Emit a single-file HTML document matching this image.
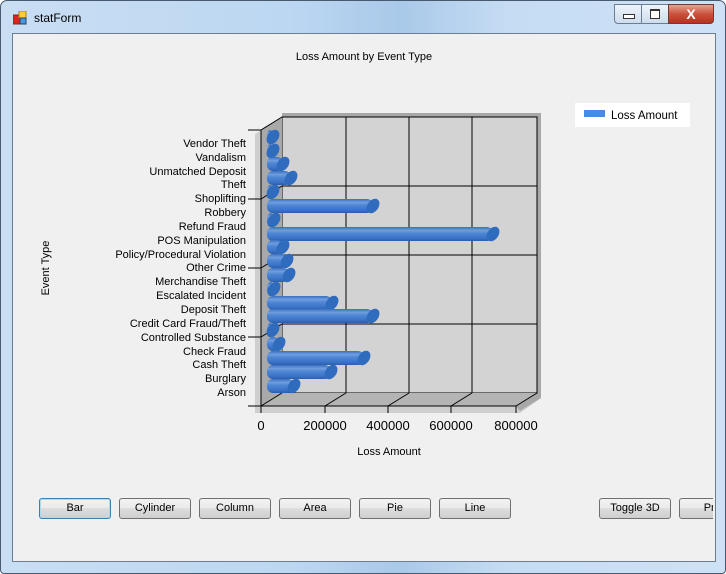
<!DOCTYPE html>
<html><head><style>
body{margin:0;width:726px;height:574px;overflow:hidden;background:#fff;font-family:"Liberation Sans",sans-serif;}
.win{position:absolute;left:0;top:0;width:724px;height:572px;border:1px solid #4a5a6e;border-radius:7px 7px 4px 4px;background:linear-gradient(90deg,#c9def3 0%,#bcd7f2 40%,#a9c9e9 55%,#c5dcf3 70%,#cfe2f5 100%);}
.client{position:absolute;left:11px;top:32px;width:702px;height:527px;border:1px solid #6e7e90;background:#f0f0f0;}
.title{position:absolute;left:33px;top:10px;font-size:12px;color:#000;}
.btn{position:absolute;top:498px;width:72px;height:21px;box-sizing:border-box;border:1px solid #707070;border-radius:3px;background:linear-gradient(#f2f2f2,#ebebeb 45%,#dddddd 50%,#cfcfcf);font-size:11px;text-align:center;line-height:19px;}
</style></head><body>
<div class="win">
<svg style="position:absolute;left:12px;top:10px" width="16" height="14"><rect x="0" y="4" width="7" height="9" fill="#d22" stroke="#822"/><rect x="6" y="0" width="7" height="7" fill="#fc3" stroke="#a80"/><rect x="7" y="7" width="6" height="6" fill="#49d" stroke="#246"/></svg>
<div class="title">statForm</div>
<div style="position:absolute;left:613px;top:3px;width:26px;height:18px;border:1px solid #6b7d93;border-radius:0 0 0 4px;background:linear-gradient(#eef4fb,#cddcec);"><div style="margin:9px 8px;width:10px;height:3px;border:1px solid #333;background:#fff"></div></div>
<div style="position:absolute;left:640px;top:3px;width:26px;height:18px;border:1px solid #6b7d93;background:linear-gradient(#eef4fb,#cddcec);"><div style="margin:4px 8px;width:8px;height:7px;border:1px solid #333;border-top-width:2px;background:#fff"></div></div>
<div style="position:absolute;left:667px;top:3px;width:44px;height:18px;border:1px solid #6b3b36;border-radius:0 0 4px 0;background:linear-gradient(#e8a391,#c9523c 50%,#b8321e);color:#fff;font-weight:bold;font-size:14px;text-align:center;line-height:18px;">X</div>
<div class="client"></div>
</div>
<svg style="position:absolute;left:0;top:0" width="726" height="574" font-family="Liberation Sans,sans-serif">
<defs>
<linearGradient id="bg" x1="0" y1="0" x2="0" y2="1">
<stop offset="0" stop-color="#3a6fbf"/><stop offset="0.25" stop-color="#6f9ee0"/><stop offset="0.45" stop-color="#4f86d4"/><stop offset="0.8" stop-color="#3a72c6"/><stop offset="1" stop-color="#2b5ea8"/></linearGradient>
</defs>
<text x="364" y="60" font-size="11" text-anchor="middle">Loss Amount by Event Type</text>
<rect x="575" y="103" width="115" height="24" fill="#fff"/>
<rect x="584" y="110" width="21" height="7" fill="#4a8ae6"/>
<text x="611" y="119" font-size="11.5">Loss Amount</text>
<text transform="translate(49,268) rotate(-90)" font-size="11" text-anchor="middle">Event Type</text>
<text x="389" y="455" font-size="11" text-anchor="middle">Loss Amount</text>
<polygon points="255,134 276,121 541,121 541,398 520,413 255,413" fill="#cfcfcf"/>
<polygon points="282,113 541,113 541,398 520,411 516,406 537,393 537,117 282,117" fill="#a8a8a8"/>
<rect x="282" y="117" width="255" height="276" fill="#d3d3d3" stroke="#000"/>
<polygon points="261,130 282,117 282,393 261,406" fill="#a9a9a9"/>
<polygon points="261,406 282,393 537,393 516,406" fill="#b4b4b4"/>
<g stroke="#000" stroke-width="1" fill="none">
<line x1="346" y1="117" x2="346" y2="393"/><line x1="409" y1="117" x2="409" y2="393"/><line x1="472" y1="117" x2="472" y2="393"/>
<line x1="282" y1="186" x2="537" y2="186"/><line x1="282" y1="255" x2="537" y2="255"/><line x1="282" y1="324" x2="537" y2="324"/>
<line x1="261" y1="130" x2="282" y2="117"/><line x1="261" y1="199" x2="282" y2="186"/><line x1="261" y1="268" x2="282" y2="255"/><line x1="261" y1="337" x2="282" y2="324"/><line x1="261" y1="406" x2="282" y2="393"/>
<line x1="325" y1="406" x2="346" y2="393"/><line x1="388" y1="406" x2="409" y2="393"/><line x1="451" y1="406" x2="472" y2="393"/><line x1="516" y1="406" x2="537" y2="393"/>
<line x1="261" y1="130" x2="261" y2="406"/><line x1="261" y1="406" x2="516" y2="406"/>
<line x1="248" y1="130" x2="261" y2="130"/><line x1="248" y1="199" x2="261" y2="199"/><line x1="248" y1="268" x2="261" y2="268"/><line x1="248" y1="337" x2="261" y2="337"/><line x1="248" y1="406" x2="261" y2="406"/>
<line x1="261" y1="406" x2="261" y2="413"/><line x1="325" y1="406" x2="325" y2="413"/><line x1="388" y1="406" x2="388" y2="413"/><line x1="451" y1="406" x2="451" y2="413"/><line x1="516" y1="406" x2="516" y2="413"/>
</g>
<g font-size="13" text-anchor="middle" fill="#000">
<text x="261" y="430">0</text><text x="325" y="430">200000</text><text x="388" y="430">400000</text><text x="451" y="430">600000</text><text x="516" y="430">800000</text>
</g>
<g font-size="11" text-anchor="end" fill="#000">
<text x="246" y="147">Vendor Theft</text>
<text x="246" y="161">Vandalism</text>
<text x="246" y="175">Unmatched Deposit</text>
<text x="246" y="188">Theft</text>
<text x="246" y="202">Shoplifting</text>
<text x="246" y="216">Robbery</text>
<text x="246" y="230">Refund Fraud</text>
<text x="246" y="244">POS Manipulation</text>
<text x="246" y="258">Policy/Procedural Violation</text>
<text x="246" y="271">Other Crime</text>
<text x="246" y="285">Merchandise Theft</text>
<text x="246" y="299">Escalated Incident</text>
<text x="246" y="313">Deposit Theft</text>
<text x="246" y="327">Credit Card Fraud/Theft</text>
<text x="246" y="341">Controlled Substance</text>
<text x="246" y="355">Check Fraud</text>
<text x="246" y="368">Cash Theft</text>
<text x="246" y="382">Burglary</text>
<text x="246" y="396">Arson</text>
</g>
<g>
<g transform="translate(0,137)"><rect x="267" y="-7" width="6" height="14" rx="6" fill="url(#bg)"/><ellipse cx="273" cy="0" rx="5.5" ry="8" transform="rotate(35 273 0)" fill="#2f6cbd"/></g>
<g transform="translate(0,151)"><rect x="267" y="-7" width="6" height="14" rx="6" fill="url(#bg)"/><ellipse cx="273" cy="0" rx="5.5" ry="8" transform="rotate(35 273 0)" fill="#2f6cbd"/></g>
<g transform="translate(0,164)"><rect x="267" y="-7" width="16" height="14" rx="6" fill="url(#bg)"/><ellipse cx="283" cy="0" rx="5.5" ry="8" transform="rotate(35 283 0)" fill="#2f6cbd"/></g>
<g transform="translate(0,178)"><rect x="267" y="-7" width="24" height="14" rx="6" fill="url(#bg)"/><ellipse cx="291" cy="0" rx="5.5" ry="8" transform="rotate(35 291 0)" fill="#2f6cbd"/></g>
<g transform="translate(0,192)"><rect x="267" y="-7" width="6" height="14" rx="6" fill="url(#bg)"/><ellipse cx="273" cy="0" rx="5.5" ry="8" transform="rotate(35 273 0)" fill="#2f6cbd"/></g>
<g transform="translate(0,206)"><rect x="267" y="-7" width="106" height="14" rx="6" fill="url(#bg)"/><ellipse cx="373" cy="0" rx="5.5" ry="8" transform="rotate(35 373 0)" fill="#2f6cbd"/></g>
<g transform="translate(0,220)"><rect x="267" y="-7" width="7" height="14" rx="6" fill="url(#bg)"/><ellipse cx="274" cy="0" rx="5.5" ry="8" transform="rotate(35 274 0)" fill="#2f6cbd"/></g>
<g transform="translate(0,234)"><rect x="267" y="-7" width="226" height="14" rx="6" fill="url(#bg)"/><ellipse cx="493" cy="0" rx="5.5" ry="8" transform="rotate(35 493 0)" fill="#2f6cbd"/></g>
<g transform="translate(0,247)"><rect x="267" y="-7" width="16" height="14" rx="6" fill="url(#bg)"/><ellipse cx="283" cy="0" rx="5.5" ry="8" transform="rotate(35 283 0)" fill="#2f6cbd"/></g>
<g transform="translate(0,261)"><rect x="267" y="-7" width="20" height="14" rx="6" fill="url(#bg)"/><ellipse cx="287" cy="0" rx="5.5" ry="8" transform="rotate(35 287 0)" fill="#2f6cbd"/></g>
<g transform="translate(0,275)"><rect x="267" y="-7" width="22" height="14" rx="6" fill="url(#bg)"/><ellipse cx="289" cy="0" rx="5.5" ry="8" transform="rotate(35 289 0)" fill="#2f6cbd"/></g>
<g transform="translate(0,289)"><rect x="267" y="-7" width="7" height="14" rx="6" fill="url(#bg)"/><ellipse cx="274" cy="0" rx="5.5" ry="8" transform="rotate(35 274 0)" fill="#2f6cbd"/></g>
<g transform="translate(0,303)"><rect x="267" y="-7" width="65" height="14" rx="6" fill="url(#bg)"/><ellipse cx="332" cy="0" rx="5.5" ry="8" transform="rotate(35 332 0)" fill="#2f6cbd"/></g>
<g transform="translate(0,316)"><rect x="267" y="-7" width="106" height="14" rx="6" fill="url(#bg)"/><ellipse cx="373" cy="0" rx="5.5" ry="8" transform="rotate(35 373 0)" fill="#2f6cbd"/></g>
<g transform="translate(0,330)"><rect x="267" y="-7" width="6" height="14" rx="6" fill="url(#bg)"/><ellipse cx="273" cy="0" rx="5.5" ry="8" transform="rotate(35 273 0)" fill="#2f6cbd"/></g>
<g transform="translate(0,344)"><rect x="267" y="-7" width="12" height="14" rx="6" fill="url(#bg)"/><ellipse cx="279" cy="0" rx="5.5" ry="8" transform="rotate(35 279 0)" fill="#2f6cbd"/></g>
<g transform="translate(0,358)"><rect x="267" y="-7" width="97" height="14" rx="6" fill="url(#bg)"/><ellipse cx="364" cy="0" rx="5.5" ry="8" transform="rotate(35 364 0)" fill="#2f6cbd"/></g>
<g transform="translate(0,372)"><rect x="267" y="-7" width="64" height="14" rx="6" fill="url(#bg)"/><ellipse cx="331" cy="0" rx="5.5" ry="8" transform="rotate(35 331 0)" fill="#2f6cbd"/></g>
<g transform="translate(0,386)"><rect x="267" y="-7" width="27" height="14" rx="6" fill="url(#bg)"/><ellipse cx="294" cy="0" rx="5.5" ry="8" transform="rotate(35 294 0)" fill="#2f6cbd"/></g>
</g>
</svg>
<div class="btn" style="left:39px;border-color:#3c7fb1;box-shadow:inset 0 0 0 1px #a8dcf5">Bar</div>
<div class="btn" style="left:119px">Cylinder</div>
<div class="btn" style="left:199px">Column</div>
<div class="btn" style="left:279px">Area</div>
<div class="btn" style="left:359px">Pie</div>
<div class="btn" style="left:439px">Line</div>
<div class="btn" style="left:599px">Toggle 3D</div>
<div style="position:absolute;left:679px;top:498px;width:34px;height:21px;overflow:hidden"><div class="btn" style="left:0;top:0">Print</div></div>
</body></html>
